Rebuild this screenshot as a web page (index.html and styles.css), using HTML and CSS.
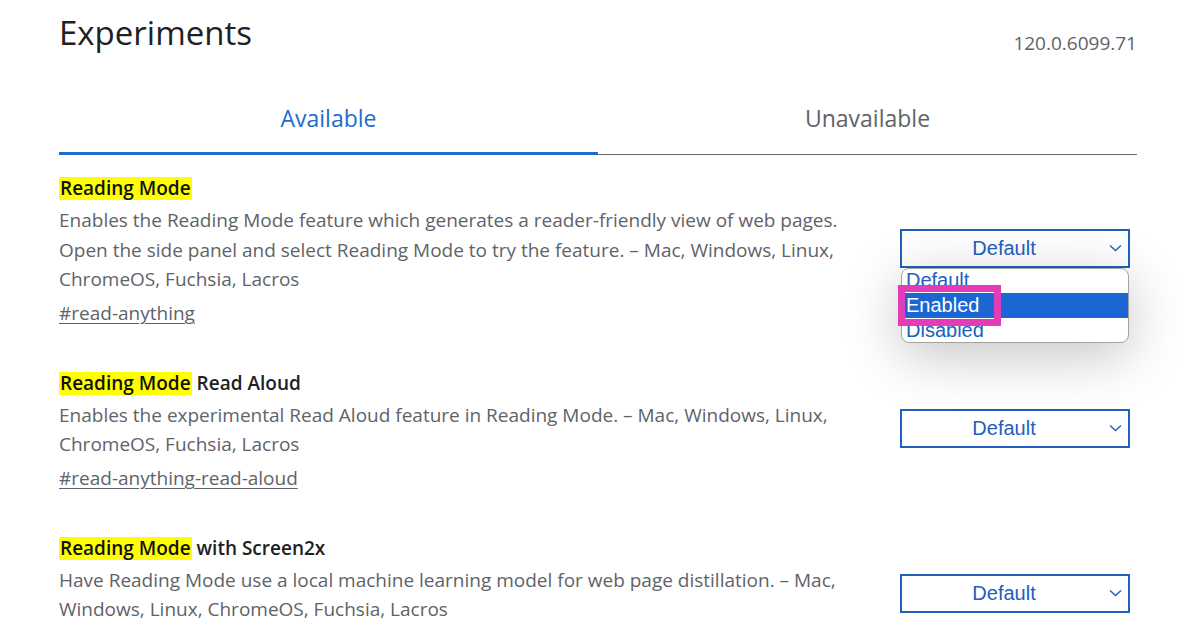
FILE: index.html
```html
<!DOCTYPE html>
<html lang="en">
<head>
<meta charset="utf-8">
<title>Experiments</title>
<link rel="stylesheet" href="styles.css">
</head>
<body>
<div class="page">
  <header class="head">
    <h1 class="heading">Experiments</h1>
    <span class="version">120.0.6099.71</span>
  </header>
  <nav class="tabs">
    <div class="tab tab-active">Available</div>
    <div class="tab">Unavailable</div>
  </nav>

  <section class="experiment">
    <h2 class="exp-name"><mark class="hl">Reading Mode</mark></h2>
    <div class="exp-row">
      <p class="desc">Enables the Reading Mode feature which generates a reader-friendly view of web pages.<br>Open the side panel and select Reading Mode to try the feature. – Mac, Windows, Linux,<br>ChromeOS, Fuchsia, Lacros</p>
      <div class="select-wrap">
        <div class="select">
          <span class="select-text">Default</span>
          <svg class="chev" width="13" height="8" viewBox="0 0 13 8"><path d="M1 1.5 L6.5 6.5 L12 1.5" fill="none" stroke="#2160be" stroke-width="1.4"/></svg>
        </div>
        <div class="dropdown">
          <div class="option">Default</div>
          <div class="option option-selected">Enabled</div>
          <div class="option">Disabled</div>
        </div>
        <div class="focus-box"></div>
      </div>
    </div>
    <a class="exp-link" href="#read-anything">#read-anything</a>
  </section>

  <section class="experiment">
    <h2 class="exp-name"><mark class="hl">Reading Mode</mark> Read Aloud</h2>
    <div class="exp-row">
      <p class="desc">Enables the experimental Read Aloud feature in Reading Mode. – Mac, Windows, Linux,<br>ChromeOS, Fuchsia, Lacros</p>
      <div class="select-wrap">
        <div class="select">
          <span class="select-text">Default</span>
          <svg class="chev" width="13" height="8" viewBox="0 0 13 8"><path d="M1 1.5 L6.5 6.5 L12 1.5" fill="none" stroke="#2160be" stroke-width="1.4"/></svg>
        </div>
      </div>
    </div>
    <a class="exp-link" href="#read-anything-read-aloud">#read-anything-read-aloud</a>
  </section>

  <section class="experiment">
    <h2 class="exp-name"><mark class="hl">Reading Mode</mark> with Screen2x</h2>
    <div class="exp-row">
      <p class="desc">Have Reading Mode use a local machine learning model for web page distillation. – Mac,<br>Windows, Linux, ChromeOS, Fuchsia, Lacros</p>
      <div class="select-wrap">
        <div class="select">
          <span class="select-text">Default</span>
          <svg class="chev" width="13" height="8" viewBox="0 0 13 8"><path d="M1 1.5 L6.5 6.5 L12 1.5" fill="none" stroke="#2160be" stroke-width="1.4"/></svg>
        </div>
      </div>
    </div>
  </section>
</div>
</body>
</html>
```

FILE: styles.css
```css
html, body {
  margin: 0;
  padding: 0;
  background: #ffffff;
  overflow: hidden;
}

body {
  font-family: "Open Sans", "Noto Sans", sans-serif;
  color: #202124;
}

.page {
  padding: 0 63px 0 59px;
  height: 628px;
  overflow: hidden;
}

.head {
  display: flex;
  justify-content: space-between;
  align-items: flex-start;
  padding-top: 13px;
}

.heading {
  margin: 0;
  font-size: 33px;
  line-height: 40px;
  font-weight: 400;
  color: #202124;
}

.version {
  margin-top: 18px;
  font-size: 19px;
  line-height: 24px;
  color: #5f6368;
}

.tabs {
  display: flex;
  align-items: flex-end;
}

.tab {
  flex: 1;
  text-align: center;
  font-size: 23px;
  line-height: 30px;
  padding: 48px 0 21px;
  color: #5f6368;
  border-bottom: 1px solid #6b6b6b;
}

.tab-active {
  color: #1f6bd0;
  padding-bottom: 19px;
  border-bottom: 3px solid #1f6bd0;
}

.experiment {
  margin-top: 22px;
}

.experiment + .experiment {
  margin-top: 43px;
}

.exp-name {
  margin: 0;
  font-size: 19px;
  line-height: 23px;
  font-weight: 600;
  color: #202124;
}

.hl {
  display: inline-block;
  background: #ffff00;
  color: #111111;
  padding: 0 1px;
  line-height: 23px;
}

.exp-row {
  display: flex;
  align-items: center;
  justify-content: space-between;
  margin-top: 6px;
}

.desc {
  margin: 0;
  font-size: 19px;
  line-height: 29.5px;
  color: #5f6368;
  white-space: nowrap;
}

.exp-link {
  display: block;
  margin-top: 4.5px;
  font-size: 19px;
  line-height: 29.5px;
  color: #5f6368;
  text-decoration: underline;
  text-decoration-thickness: 1px;
  text-underline-offset: 3px;
}

.select-wrap {
  position: relative;
  width: 230px;
  margin-right: 7px;
  margin-bottom: 4px;
}

.select {
  box-sizing: border-box;
  height: 39px;
  display: flex;
  align-items: center;
  border: 2px solid #2160be;
  padding-right: 6px;
  background: #ffffff;
  font-family: "Liberation Sans", Arial, sans-serif;
  font-size: 20px;
  color: #2160be;
}

.select-text {
  flex: 1;
  text-align: center;
  padding-right: 3px;
}

.chev {
  display: block;
}

.dropdown {
  position: absolute;
  top: 39px;
  left: 1px;
  right: 1px;
  height: 75px;
  box-sizing: border-box;
  border: 1px solid #a3a3a3;
  border-radius: 8px;
  background: #ffffff;
  overflow: hidden;
  box-shadow: 0 12px 55px rgba(0, 0, 0, 0.24);
  z-index: 2;
  font-family: "Liberation Sans", Arial, sans-serif;
  font-size: 20px;
  color: #2160be;
}

.option {
  height: 25px;
  line-height: 24px;
  padding-left: 4px;
  white-space: nowrap;
}

.option:first-child {
  margin-top: -1px;
}

.option-selected {
  background: #1b66d2;
  color: #ffffff;
}

.focus-box {
  position: absolute;
  left: -2px;
  top: 56px;
  width: 103px;
  height: 41px;
  box-sizing: border-box;
  border: 7px solid #e23db6;
  z-index: 3;
}
```
